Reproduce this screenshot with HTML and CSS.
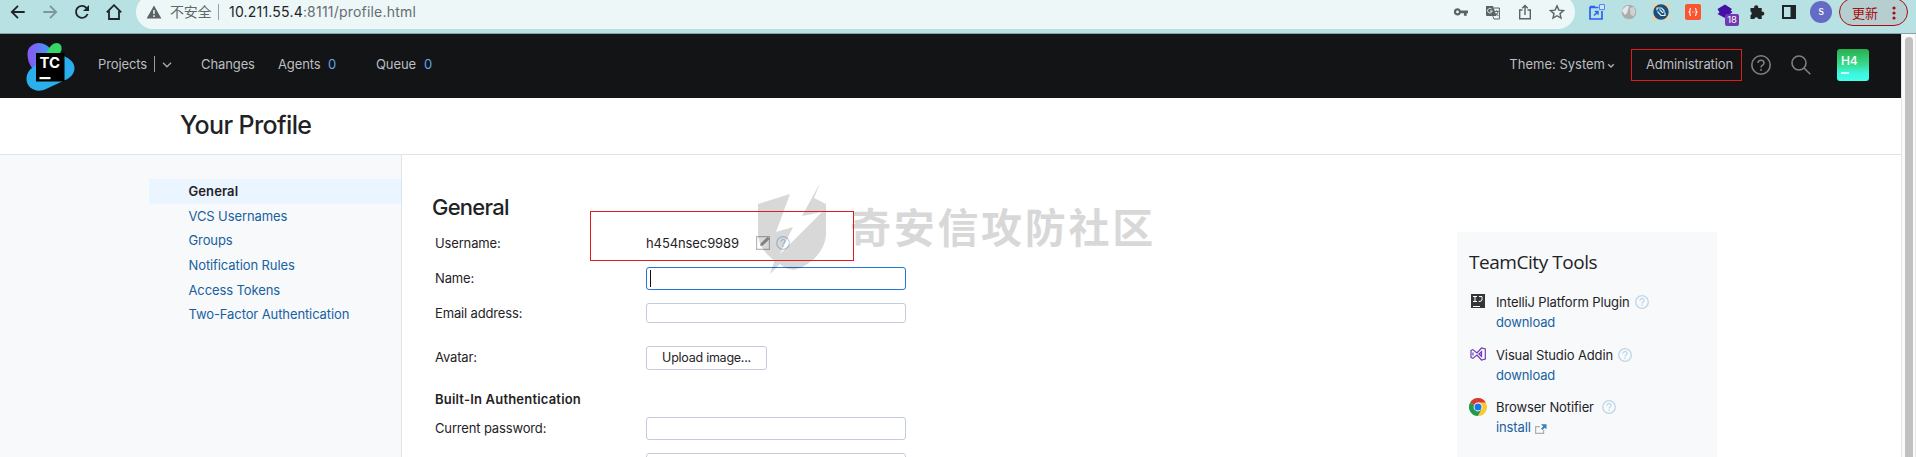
FILE: index.html
```html
<!DOCTYPE html>
<html lang="en">
<head>
<meta charset="utf-8">
<title>Your Profile — TeamCity</title>
<link rel="stylesheet" href="styles.css">
</head>
<body>
<svg width="0" height="0" class="defs">
  <symbol id="help" viewBox="0 0 14 14"><circle cx="7" cy="7" r="6.3" fill="none" stroke="currentColor" stroke-width="1.3"/><path d="M5 5.600a2 2 0 1 1 3 1.600c-.7.4-1 .7-1 1.300M7 9.600v1.300" fill="none" stroke="currentColor" stroke-width="1.3"/></symbol>
</svg>
<div class="toolbar">
  <div class="controls">
    <svg width="16" height="16" viewBox="0 0 16 16" class="dark"><path d="M14.700 8H2.200M8 1.800 1.800 8 8 14.200"/></svg>
    <svg width="16" height="16" viewBox="0 0 16 16" class="faded"><path d="M1.300 8h12.500M8 1.800 14.200 8 8 14.200"/></svg>
    <svg width="16" height="16" viewBox="0 0 16 16" class="dark"><path d="M13.600 10A6 6 0 1 1 12.400 3.800L14 5.600"/><path d="M15 1v6H9z" fill="#1f2426" stroke="none"/></svg>
    <svg width="16" height="16" viewBox="0 0 16 16" class="dark"><path d="M.8 8.300 8 1.200l7.200 7.100M3 7v8h10V7"/></svg>
  </div>
  <div class="address">
    <svg width="16" height="14" viewBox="0 0 16 14"><path d="M8 .4 15.400 13.600H.6z" fill="#5b6366"/><path d="M8 5v4M8 10.300v1.600" stroke="#eef7f8" stroke-width="1.500"/></svg>
    <span class="insecure">不安全</span><i class="bar"></i>
    <span class="url"><b>10.211.55.4</b>:8111/profile.html</span>
    <div class="page-actions">
      <svg width="16" height="16" viewBox="0 0 16 16"><path d="M4.500 4.200a3.600 3.600 0 1 0 3.300 5h3.100v2.500h2.800V9.200H15V6.400H7.800a3.600 3.600 0 0 0-3.300-2.200zm0 2.300a1.400 1.400 0 1 1 0 2.800 1.400 1.400 0 0 1 0-2.800z" fill="#5b6366" fill-rule="evenodd"/></svg>
      <svg width="16" height="16" viewBox="0 0 16 16"><path d="M1 2h7l3.500 10H2a1 1 0 0 1-1-1z" fill="#5b6366"/><path d="M7.200 6.800A2.300 2.300 0 1 1 6.500 5M5 7h2.200" stroke="#eef7f8" fill="none"/><path d="M9 4h5.400v11H9l-1.200-2.800M9.800 7.400h4M11.800 6.300v1.300M13 7.500c-.3 2-1.400 3-2.600 4M10.600 9l2.800 3" fill="none" stroke="#5b6366"/></svg>
      <svg width="16" height="16" viewBox="0 0 16 16" class="gray"><path d="M5.500 6H2.700v8.700h10.600V6h-2.800M8 11V1.600M5.200 4.300 8 1.500l2.800 2.800"/></svg>
      <svg width="16" height="16" viewBox="0 0 16 16" class="gray"><path d="m8 1.900 1.900 4.200 4.600.5L11 9.600l1 4.500-4-2.400-4 2.400 1-4.500-3.500-3 4.600-.5z"/></svg>
    </div>
  </div>
  <div class="extensions">
    <svg width="16" height="16" viewBox="0 0 16 16"><path d="M9.500 3.500H1v11.500h12V7" fill="none" stroke="#2b62ee" stroke-width="1.700"/><path d="M1 2.500h5M5 11.500 8.800 7.700M5.800 7.500H9v3.200" fill="none" stroke="#2b62ee" stroke-width="1.400"/><path d="M10.500.600h5v5h-5z" fill="#cfe9ff" stroke="#4c83ff"/></svg>
    <svg width="16" height="16" viewBox="0 0 16 16"><circle cx="8" cy="8" r="7.300" fill="#a9adae"/><path d="M2 5q4-4 6-3l-1 4-1 3-2 2-3-4z" fill="#e4e8e9"/><path d="m9 4 4-1 1.500 5-2 4.500-3-2z" fill="#cfd3d4"/></svg>
    <svg width="16" height="16" viewBox="0 0 16 16"><path d="M0 0h16v16H0z" fill="#f8cf9b"/><circle cx="8" cy="8" r="7.700" fill="#15507f"/><path d="M4 6.500V4h4.500L11 6.500v2M4.500 7.500 8 11.500h4V8.500M6.500 5.500l3.500 3.500" fill="none" stroke="#e6f2f8" stroke-width="1.200"/></svg>
    <svg width="16" height="16" viewBox="0 0 16 16"><rect width="16" height="16" rx="2" fill="#fb5430"/><path d="M6 4.500c-1.500 0-1 2-1 2.600L4 8l1 .9c0 .6-.5 2.600 1 2.600M10 4.500c1.500 0 1 2 1 2.600l1 .9-1 .9c0 .6.5 2.600-1 2.600M7 8h.7M8.600 8h.7" fill="none" stroke="#fff" stroke-width="1.100"/></svg>
    <div class="stack"><svg width="16" height="16" viewBox="0 0 16 16"><path d="m8 .5 7 4.500-1.500 1.500 2 1.500L8 14 .5 10l2-1.500L.5 5z" fill="#4510a6"/></svg><span class="count">18</span></div>
    <svg width="16" height="16" viewBox="0 0 16 16"><path d="M1.500 4h3.700a2.100 2.100 0 1 1 4 0h3.500v3.700a2 2 0 1 1 0 3.800V15H9.400a2.100 2.100 0 0 0-4.100 0H1.500v-3.800a2 2 0 0 0 0-3.700z" fill="#1f2426"/></svg>
    <svg width="16" height="16" viewBox="0 0 16 16"><path d="M1 1h14v14H1zm2 2v10h6.500V3z" fill="#1f2426" fill-rule="evenodd"/></svg>
    <span class="user">s</span>
    <div class="update">更新<svg width="4" height="14" viewBox="0 0 4 14" fill="#a50e0e"><circle cx="2" cy="2" r="1.600"/><circle cx="2" cy="7" r="1.600"/><circle cx="2" cy="12" r="1.600"/></svg></div>
  </div>
</div>
<div class="window">
<div class="page">
  <header class="header">
    <svg class="logo" width="50" height="50" viewBox="0 0 50 50">
      <defs><linearGradient id="violet" x1="0" x2="1"><stop offset=".2" stop-color="#8060f4"/><stop offset=".7" stop-color="#4f8cf5"/></linearGradient></defs>
      <path d="M1.500 12C1.500 5 7 1 13 1c5 0 9 3 13 7l-8 16-12 2c-3-4-4.500-9-4.500-14z" fill="url(#violet)"/>
      <path d="M21 10c3-6 6-9 9.500-9 4 0 5.500 3 5 7l-3 6H19z" fill="#36d667"/>
      <path d="M38 14c6 3 10.500 6.500 10.500 12 0 5-3 8.500-7 11L20 47C11 51.500.5 46.500.5 37c0-5 2.500-9 6.500-12l20-11z" fill="#2cadec"/>
      <path d="M10 11h28.500v28.500H10z"/>
      <path d="M13.500 35h11v2.200h-11z" fill="#fff"/>
      <text x="13.500" y="25.500" class="logo-text" textLength="20.500" lengthAdjust="spacingAndGlyphs">TC</text>
    </svg>
    <nav class="nav">
      <span class="projects">Projects</span><i class="divider"></i>
      <svg class="chev" width="10" height="6" viewBox="0 0 10 6"><path d="m1 .8 4 4 4-4"/></svg>
      <span class="changes">Changes</span>
      <span class="agents">Agents</span><span class="num">0</span>
      <span class="queue">Queue</span><span class="num">0</span>
    </nav>
    <div class="tools">
      <span class="theme">Theme: System</span><svg class="small-chev" width="8" height="6" viewBox="0 0 10 6"><path d="m1.500.8 3.500 3.400L8.500.8"/></svg>
      <span class="admin">Administration</span>
      <svg class="big-help" width="20" height="20" viewBox="0 0 20 20"><circle cx="10" cy="10" r="9.200"/><path d="M7 8c0-4 6.200-3.500 6 .2-.1 2-3 2.100-3 4.300M10 14v1.700"/></svg>
      <svg class="search" width="20" height="20" viewBox="0 0 20 20"><circle cx="8" cy="8" r="7"/><path d="m13 13 6.300 6.300"/></svg>
      <div class="avatar"><span>H4</span><i></i></div>
    </div>
  </header>
  <div class="title"><h1>Your Profile</h1></div>
  <div class="body">
    <aside class="side">
      <a class="active">General</a><a>VCS Usernames</a><a>Groups</a><a>Notification Rules</a><a>Access Tokens</a><a>Two-Factor Authentication</a>
    </aside>
    <main class="main">
      <section class="form">
        <h2>General</h2>
        <div class="row username"><label>Username:</label><div class="value"><span class="login">h454nsec9989</span>
          <svg class="edit" width="14" height="14" viewBox="0 0 14 14"><path d="M.6.600h12.800v12.800H.6z" fill="none" stroke="#b4b8bb" stroke-width="1.200"/><path d="m4 10 .8-2.800L11.500 1 14 2.800 6.800 9.400z" fill="#96999c"/></svg>
          <svg class="help" width="14" height="14"><use href="#help"/></svg></div></div>
        <div class="row name"><label>Name:</label><div class="input focused"><i class="caret"></i></div></div>
        <div class="row email"><label>Email address:</label><div class="input short"></div></div>
        <div class="row photo"><label>Avatar:</label><button>Upload image...</button></div>
        <h3>Built-In Authentication</h3>
        <div class="row password"><label>Current password:</label><div class="input"></div></div>
        <div class="row"><label></label><div class="input"></div></div>
      </section>
      <section class="panel">
        <h4>TeamCity Tools</h4>
        <div class="tool"><div class="icon"><svg width="14" height="14" viewBox="0 0 14 14"><path d="M0 0h14v14H0z" fill="#343538"/><path d="M2 2.500h4M4 2.500v5M2 7.500h4M8 2.500h3v3.500q0 1.500-3.300 1.500M2 12.500h7" stroke="#fff" stroke-width="1" fill="none"/></svg></div>
          <div><p>IntelliJ Platform Plugin<svg class="help" width="14" height="14"><use href="#help"/></svg></p><a>download</a></div></div>
        <div class="tool"><div class="icon"><svg class="vs" width="16" height="14" viewBox="0 0 16 14"><path d="M1 3.600 2.800 2.600 7 6l4.500-5 3.800 1v10l-3.800 1L7 8l-4.200 3.400L1 10.400zM11.500 4.700 9 7l2.500 2.300zM3 5.500v3" fill="none" stroke="#6d3bb5" stroke-width="1.200"/></svg></div>
          <div><p>Visual Studio Addin<svg class="help" width="14" height="14"><use href="#help"/></svg></p><a>download</a></div></div>
        <div class="tool"><div class="icon chrome"><svg width="18" height="18" viewBox="0 0 18 18"><path d="M9 9 1.200 4.500a9 9 0 0 1 15.600 0z" fill="#d93a31"/><path d="M9 9 1.200 4.500A9 9 0 0 0 9 18l4-6.800z" fill="#249a4b"/><path d="M9 4.500h7.800A9 9 0 0 1 9 18l4-6.800z" fill="#fcc934"/><circle cx="9" cy="9" r="4.400" fill="#fff"/><circle cx="9" cy="9" r="3.500" fill="#1a73e8"/></svg></div>
          <div><p class="notifier">Browser Notifier<svg class="help" width="14" height="14"><use href="#help"/></svg></p><a>install<svg class="ext" width="12" height="10" viewBox="0 0 12 10"><path d="M5 2.600H.6v6.800h8V6" fill="none" stroke="#a9b0b6" stroke-width="1.200"/><path d="M6 .3h5.500v5L9.700 3.700 7.400 6 6 4.700l2.200-2.300z" fill="#3c7fb6"/></svg></a></div></div>
      </section>
    </main>
  </div>
</div>
<div class="scroll"><div class="thumb"></div></div>
</div>
<div class="watermark">
  <svg width="76" height="92" viewBox="0 0 76 92"><path d="M3 21 35 11 21 49 38 44 21 79C9 70 3 61 3 50zM65 0 59 15 71 21V50C71 67 57 82 39 87 32 86 28 84 25 81L15 91 20 76 67 29 47 33z"/></svg>
  <span>奇安信攻防社区</span>
</div>
<div class="mark-admin"></div>
<div class="mark-user"></div>
</body>
</html>
```
FILE: styles.css
```css
* { box-sizing: border-box; }
body { margin: 0; width: 1916px; height: 457px; overflow: hidden; position: relative; background: #fff; color: #1f2326; font: 13px/20px Inter, "Noto Sans CJK SC", sans-serif; letter-spacing: -.1px; }
h1, h2, h3, h4, p { margin: 0; font-weight: 500; }
svg { display: block; flex: none; }
i { display: block; flex: none; }
.defs { position: absolute; }

.toolbar { height: 34px; background: #b8e1e4; border-bottom: 1px solid #86a5a8; display: flex; align-items: flex-start; overflow: hidden; }
.controls { display: flex; gap: 16px; padding: 4px 0 0 10px; width: 136px; }
.dark, .faded, .gray { fill: none; stroke: #1f2426; stroke-width: 1.8; }
.faded { stroke: #7f9699; }
.gray { stroke: #5b6366; stroke-width: 1.4; }
.address { width: 1439px; height: 34px; margin-top: -5px; border-radius: 17px; background: #eef7f8; display: flex; align-items: center; padding-left: 10px; font-size: 14px; white-space: nowrap; }
.insecure { margin-left: 8px; width: 48px; color: #5f6769; letter-spacing: -.2px; }
.bar { width: 1px; height: 16px; background: #96a0a2; }
.url { margin-left: 10px; color: #666d70; letter-spacing: .2px; }
.url b { font-weight: 400; color: #202427; }
.page-actions { display: flex; gap: 16px; margin-left: auto; padding-right: 10px; }
.extensions { display: flex; gap: 16px; margin-left: 14px; padding-top: 4px; }
.stack { position: relative; width: 16px; }
.count { position: absolute; left: 8px; top: 10px; width: 14px; height: 12px; border-radius: 2px; background: #7138b4; color: #fff; font-size: 9.5px; line-height: 12px; text-align: center; }
.user { width: 22px; height: 22px; margin: -3px -9px 0 -3px; border-radius: 50%; background: #636bc4; color: #fff; text-align: center; line-height: 21px; font-size: 11px; }
.update { width: 69px; height: 28px; margin-top: -6px; border: 1px solid #a50e0e; border-radius: 14px; background: #b7ced1; color: #a50e0e; font-size: 13px; display: flex; align-items: center; justify-content: space-between; padding: 1px 11px 0 12px; }

.window { display: flex; height: 423px; }
.page { width: 1901px; display: flex; flex-direction: column; }
.scroll { width: 15px; background: #fafafa; border-left: 1px solid #e4e4e4; border-right: 1px solid #e9e9e9; padding: 3px 2px 0 3px; overflow: hidden; }
.thumb { height: 440px; width: 8px; border-radius: 4px; background: #c1c1c1; }

.header { height: 64px; flex: none; background: #121416; color: #bcbec0; display: flex; align-items: center; padding-left: 26px; }
.logo { margin-top: 2px; }
.logo-text { font: 700 15px Inter, sans-serif; fill: #fff; letter-spacing: 0; }
.nav, .tools { display: flex; align-items: center; }
.nav { padding-left: 22px; margin-top: -4px; }
.projects { width: 56px; }
.divider { width: 1px; height: 16px; background: #9b9da0; }
.chev { margin: 2px 29px 0 7px; }
.chev, .small-chev { fill: none; stroke: #aaacae; stroke-width: 1.300; }
.changes { width: 77px; }
.agents { width: 50px; }
.queue { width: 48px; }
.num { width: 48px; color: #64a5ee; }
.tools { margin-left: auto; padding-right: 32px; margin-top: -2px; }
.theme, .admin { margin-top: -2px; }
.theme { letter-spacing: 0; }
.small-chev { margin: 2px 0 0 2px; stroke-width: 1.800; }
.admin { margin-left: 31px; width: 105px; }
.big-help, .search { fill: none; stroke: #7d8185; stroke-width: 1.600; }
.search { margin: 0 26px 0 20px; }
.avatar { width: 32px; height: 32px; border-radius: 3px; background: linear-gradient(#28ae4b, #39dc91 50%, #3cf4df 75%, #44ffe9); color: #fff; padding: 3px 4px; font: 500 12px/18px Inter, sans-serif; }
.avatar i { width: 8px; height: 2px; background: #c9fff1; margin-top: 2px; }

.title { height: 57px; flex: none; padding: 12px 0 0 180px; border-bottom: 1px solid #dfe3ea; }
h1 { font-size: 25px; line-height: 30px; letter-spacing: -.62px; }
.body { display: flex; flex: 1; min-height: 0; overflow: hidden; }
.side { width: 402px; background: #f7f9fb; border-right: 1px solid #dfe3ea; padding: 24px 0 0 149px; }
.side a, .panel a { color: #1861a0; }
.side a { display: flex; align-items: center; height: 24.600px; padding: 0 0 0 39.500px; letter-spacing: -.1px; }
.side .active { background: #ebf5ff; color: #1f2326; font-weight: 600; letter-spacing: .1px; }
.main { flex: 1; display: flex; justify-content: space-between; align-items: flex-start; }
.form { padding: 38px 0 0 33px; }
h2 { font-size: 22px; line-height: 28px; margin-left: -3px; letter-spacing: -.75px; }
.row { display: flex; align-items: flex-start; height: 36px; }
label { width: 211px; line-height: 22px; letter-spacing: -.15px; }
.username { margin-top: 11px; height: 35px; }
.value { display: flex; align-items: center; height: 22px; }
.login { width: 110px; }
.help { color: #bdd6ea; }
.edit + .help { margin-left: 6px; }
.input { width: 260px; height: 23px; border: 1px solid #c3cad9; border-radius: 3px; }
.input.short { height: 20px; }
.email label { line-height: 21px; }
.focused { border-color: #2177d8; padding: 2px 3px; }
.caret { width: 1px; height: 17px; background: #111; }
.photo { margin-top: 7px; height: 43px; }
button { width: 121px; height: 24px; padding: 0; border: 1px solid #c3cad9; border-radius: 3px; background: #fff; font: 12.500px/20px Inter, sans-serif; letter-spacing: -.25px; color: #1f2326; }
h3 { font-size: 13px; line-height: 20px; padding-bottom: 2px; font-weight: 600; letter-spacing: .2px; }
.password { margin-top: 6px; }

.panel { width: 260px; height: 240px; margin: 77px 184px 0 0; padding: 17px 12px 0; background: #f7f9fb; }
h4 { font: 400 19px/26px "Open Sans", sans-serif; color: #1f2326; letter-spacing: -.45px; }
.tool { display: flex; height: 52.500px; }
h4 + .tool { margin-top: 17px; }
.icon { width: 27px; padding: 2px 0 0 2px; }
.vs { margin-left: -1px; }
.icon.chrome { padding: 1px 0 0 0; }
.tool p { display: flex; align-items: center; font-weight: 400; gap: 5px; }
.tool p, .tool a { letter-spacing: -.12px; }
.tool .notifier { gap: 8px; }
.tool a { display: flex; align-items: center; gap: 4px; }
.ext { margin-top: 4px; }

.watermark { position: absolute; left: 755px; top: 183px; display: flex; opacity: .15; color: #000; }
.watermark span { margin: 18px 0 0 19px; font: 700 41px/48px "Noto Sans CJK SC", sans-serif; letter-spacing: 2.700px; white-space: nowrap; }
.mark-admin, .mark-user { position: absolute; border: 1px solid #e3191b; }
.mark-admin { left: 1631px; top: 49px; width: 111px; height: 32px; }
.mark-user { left: 590px; top: 211px; width: 264px; height: 50px; }
```
